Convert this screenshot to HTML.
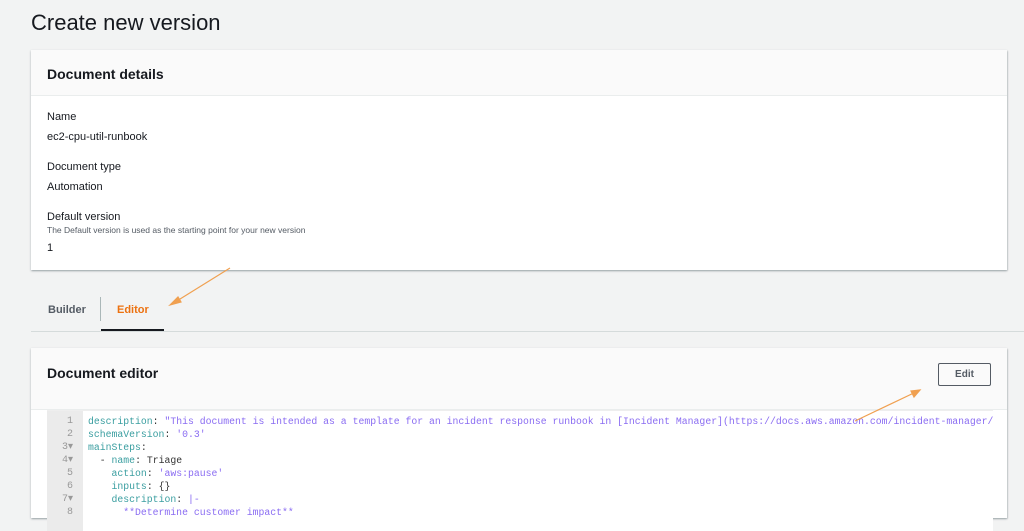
<!DOCTYPE html>
<html><head><style>
body{margin:0;width:1024px;height:514px;overflow:hidden;background:#f2f3f3;font-family:"Liberation Sans",sans-serif;color:#16191f;position:relative}
.a{position:absolute}
.card{position:absolute;left:31px;width:976px;background:#fff;box-shadow:0 1px 2px rgba(0,28,36,.3),1px 1px 1px rgba(0,28,36,.1)}
.hd{background:#fafafa;border-bottom:1px solid #eaeded;height:46px;box-sizing:border-box;padding:16px 16px;font-weight:bold;font-size:14px}
.t{position:absolute;left:16px;font-size:11px}
.code{position:absolute;left:16px;top:62px;width:946px;height:120px;background:#fff;font-family:"Liberation Mono",monospace;font-size:9.8px;overflow:hidden;border-top:1px solid #eee}
.g{position:absolute;left:0;top:0;width:36px;height:120px;background:#ebebeb}
.ln{position:absolute;height:13px;line-height:13px;white-space:pre}
.n{color:#999;width:26px;text-align:right;left:0;font-size:10px}
.c{left:41px;color:#333}
.k{color:#3a9ea0}.s{color:#8a6cf2}
</style></head><body>
<div class="a" style="left:31px;top:10px;font-size:22px;color:#16191f">Create new version</div>
<div class="card" style="top:50px;height:220px">
<div class="hd">Document details</div>
<div class="t" style="top:61px">Name</div>
<div class="t" style="top:81px">ec2-cpu-util-runbook</div>
<div class="t" style="top:111px">Document type</div>
<div class="t" style="top:131px">Automation</div>
<div class="t" style="top:161px">Default version</div>
<div class="t" style="top:175px;font-size:8.5px;color:#545b64">The Default version is used as the starting point for your new version</div>
<div class="t" style="top:192px">1</div>
</div>
<div class="a" style="left:31px;top:331px;width:993px;height:1px;background:#d5dbdb"></div>
<div class="a" style="left:48px;top:304px;font-size:11px;font-weight:bold;color:#545b64">Builder</div>
<div class="a" style="left:100px;top:297px;width:1px;height:24px;background:#aab7b8"></div>
<div class="a" style="left:117px;top:304px;font-size:11px;font-weight:bold;color:#ec7211">Editor</div>
<div class="a" style="left:101px;top:329px;width:63px;height:2px;background:#16191f"></div>
<div class="card" style="top:348px;height:170px">
<div class="hd" style="height:62px;padding-top:17px">Document editor</div>
<div class="a" style="left:907px;top:15px;width:53px;height:23px;border:1px solid #545b64;border-radius:2px;box-sizing:border-box;font-size:10px;font-weight:bold;display:flex;align-items:center;justify-content:center;color:#545b64">Edit</div>
<div class="code"><div class="g"></div>
<div class="ln n" style="top:4px">1</div><div class="ln c" style="top:4px"><span class="k">description</span>: <span class="s">"This document is intended as a template for an incident response runbook in [Incident Manager](https://docs.aws.amazon.com/incident-manager/latest/u</span></div>
<div class="ln n" style="top:17px">2</div><div class="ln c" style="top:17px"><span class="k">schemaVersion</span>: <span class="s">'0.3'</span></div>
<div class="ln n" style="top:30px">3▾</div><div class="ln c" style="top:30px"><span class="k">mainSteps</span>:</div>
<div class="ln n" style="top:43px">4▾</div><div class="ln c" style="top:43px">  - <span class="k">name</span>: Triage</div>
<div class="ln n" style="top:56px">5</div><div class="ln c" style="top:56px">    <span class="k">action</span>: <span class="s">'aws:pause'</span></div>
<div class="ln n" style="top:69px">6</div><div class="ln c" style="top:69px">    <span class="k">inputs</span>: {}</div>
<div class="ln n" style="top:82px">7▾</div><div class="ln c" style="top:82px">    <span class="k">description</span>: <span class="s">|-</span></div>
<div class="ln n" style="top:95px">8</div><div class="ln c" style="top:95px"><span class="s">      **Determine customer impact**</span></div>
</div>
</div>
<svg class="a" style="left:0;top:0" width="1024" height="514"><g stroke="#f0a050" stroke-width="1.2" fill="#f0a050">
<line x1="230" y1="268" x2="172" y2="304"/><polygon points="170,305 178,297 181,302"/>
<line x1="855" y1="421" x2="918" y2="391"/><polygon points="920,390 911,391 914,397"/></g></svg>
</body></html>
